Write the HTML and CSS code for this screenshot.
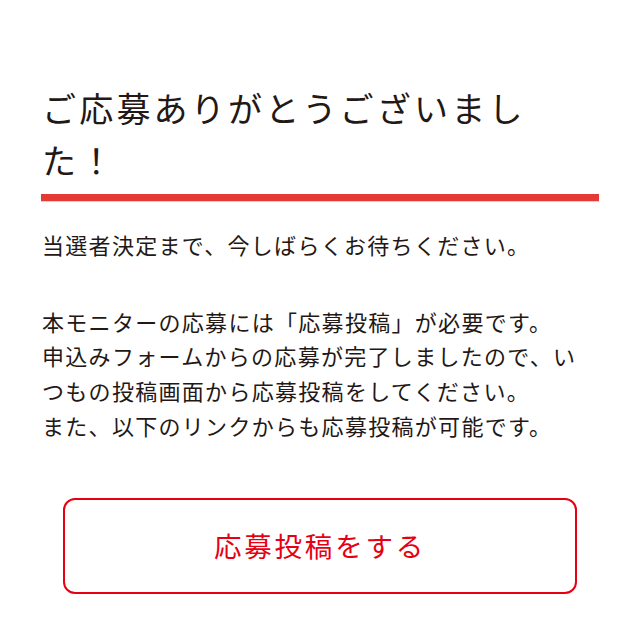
FILE: index.html
```html
<!DOCTYPE html>
<html lang="ja">
<head>
    <meta charset="UTF-8">
    <title>ご応募ありがとうございました</title>
    <link rel="stylesheet" href="styles.css">
</head>
<body>
<div class="wrap">
    <h1 class="thanksTitle">ご応募ありがとうございました！</h1>
    <p class="lead">当選者決定まで、今しばらくお待ちください。</p>
    <p class="note">本モニターの応募には「応募投稿」が必要です。<br/>申込みフォームからの応募が完了しましたので、いつもの投稿画面から応募投稿をしてください。<br/>また、以下のリンクからも応募投稿が可能です。</p>
    <div class="btnBox">
        <a href="#" class="postBtn">応募投稿をする</a>
    </div>
</div>
</body>
</html>
```

FILE: styles.css
```css
* {
    margin: 0;
    padding: 0;
    border: 0;
    font: inherit;
    font-size: 100%;
    vertical-align: baseline;
}

body {
    font: 22px/34.7px "Noto Sans CJK JP", "Noto Sans", sans-serif;
    color: #231815;
    background: #fff;
    letter-spacing: 1.3px;
}

a {
    text-decoration: none;
}

.wrap {
    width: 558px;
    margin: 0 auto;
    padding-top: 82px;
}

.thanksTitle {
    font-size: 34px;
    line-height: 52px;
    letter-spacing: 3.2px;
    padding-left: 1px;
    padding-bottom: 8px;
    border-bottom: 7px solid #e33a35;
    box-shadow: 0 1px 0 #f6c9c7;
}

.lead {
    margin-top: 26px;
    padding-left: 1px;
}

.note {
    margin-top: 42px;
    padding-left: 1px;
}

.btnBox {
    padding: 55px 22px 0;
}

.postBtn {
    display: flex;
    align-items: center;
    justify-content: center;
    height: 92px;
    border: 2px solid #e60012;
    border-radius: 12px;
    color: #e60012;
    font-size: 27.5px;
    letter-spacing: 2.8px;
}
```
